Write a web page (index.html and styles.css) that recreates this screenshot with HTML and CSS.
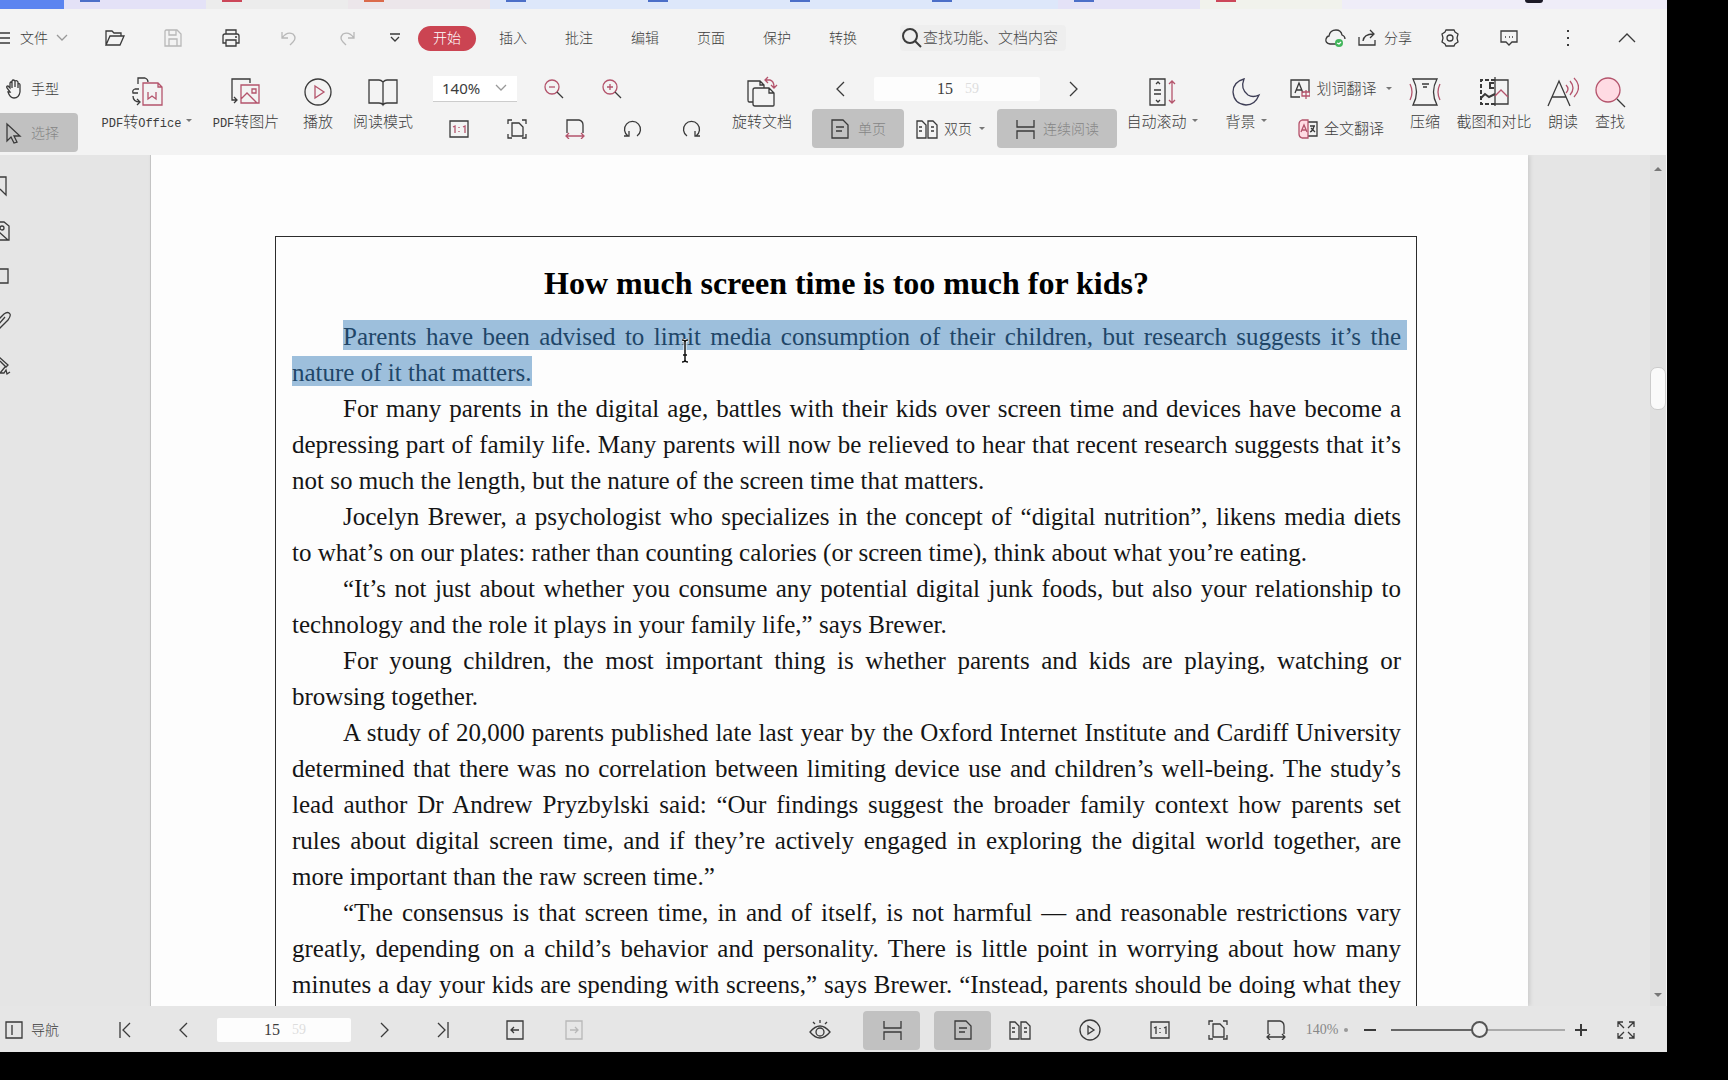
FILE: index.html
```html
<!DOCTYPE html>
<html lang="zh-CN">
<head>
<meta charset="utf-8">
<title>PDF</title>
<link rel="stylesheet" href="styles.css">
</head>
<body>
<svg class="sprite" aria-hidden="true">
  <symbol id="fit" viewBox="0 0 20 20"><path d="M1 5V1h4M15 1h4v4M19 15v4h-4M5 19H1v-4M5 4h7l4 4v9H5z"/></symbol>
  <symbol id="one" viewBox="0 0 20 20"><path d="M1 2h18v16H1z"/><path class="accent" d="M4 8l2-1v7M14 8l2-1v7M10 8v1M10 12v1"/></symbol>
  <symbol id="wide" viewBox="0 0 20 20"><path d="M2 14V1h12q4 1 4 5v8"/><path class="accent" d="M1 17h18M4 14l-3 3 3 3M16 14l3 3-3 3"/></symbol>
  <symbol id="single" viewBox="0 0 20 20"><path d="M2 1h11l5 5v13H2zM6 8h8M6 12h6"/></symbol>
  <symbol id="double" viewBox="0 0 22 20"><path d="M1 2h5l4 4v13H1zM12 2h5l4 4v13h-9zM3 8h3M3 12h3M15 8h3M15 12h3"/></symbol>
  <symbol id="flow" viewBox="0 0 20 20"><path d="M2 1v7h17V1M2 20v-8h17v8"/></symbol>
</svg>
<div class="app">
  <div class="tabs">
    <i class="tab-active"></i>
    <i class="tab lilac"><b class="blue"></b></i><i class="tab"><b class="red"></b></i><i class="tab pink"><b class="orange"></b></i><i class="tab sky"><b class="blue"></b></i><i class="tab sky"><b class="blue"></b></i><i class="tab sky"><b class="blue"></b></i><i class="tab sky"><b class="blue"></b></i><i class="tab lilac"><b class="blue"></b></i><i class="tab cream"><b class="red"></b></i>
    <span class="tab-rest"><b></b></span>
  </div>

  <header class="menu">
    <button class="file"><svg width="12" height="14" viewBox="0 0 12 14"><path d="M0 2h10M0 7h10M0 12h10"/></svg>文件<svg class="dim" width="12" height="8" viewBox="0 0 12 8"><path d="M1 1l5 5 5-5"/></svg></button>
    <button class="tool" aria-label="打开"><svg width="22" height="18" viewBox="0 0 22 18"><path d="M2 16V2h6l2 2h7v3M2 16L6 7h14l-4 9z"/></svg></button>
    <button class="tool off" aria-label="保存"><svg width="18" height="18" viewBox="0 0 18 18"><path d="M1 17V2l1-1h11l4 4v12zM5 17v-7h8v7M5 1v5h7V1"/></svg></button>
    <button class="tool" aria-label="打印"><svg width="20" height="18" viewBox="0 0 20 18"><path d="M5 5V1h10v4M5 14H2V7q0-2 2-2h12q2 0 2 2v7h-3M5 11h10v6H5zM14 8h2"/></svg></button>
    <button class="tool off" aria-label="撤销"><svg width="18" height="16" viewBox="0 0 18 16"><path d="M2 2v6h6M2 8q5-7 11-4 4 4 0 8l-3 3"/></svg></button>
    <button class="tool off" aria-label="重做"><svg width="18" height="16" viewBox="0 0 18 16"><path d="M16 2v6h-6M16 8Q11 1 5 4q-4 4 0 8l3 3"/></svg></button>
    <button class="tool narrow" aria-label="更多"><svg width="12" height="10" viewBox="0 0 12 10"><path d="M1 1h10M2 4l4 4 4-4"/></svg></button>
    <nav class="menu-tabs">
      <button class="current">开始</button><button>插入</button><button>批注</button><button>编辑</button><button>页面</button><button>保护</button><button>转换</button>
    </nav>
    <label class="search"><svg width="20" height="20" viewBox="0 0 20 20"><circle cx="8" cy="8" r="7"/><path d="M13 13l6 6"/></svg><input type="text" placeholder="查找功能、文档内容" aria-label="查找功能、文档内容"></label>
    <span class="grow"></span>
    <button aria-label="云"><svg width="22" height="20" viewBox="0 0 22 20"><path d="M12 16H6Q1 15 2 11q1-3 3-3 1-6 7-6 5 0 6 5 3 1 3 4"/><circle cx="15" cy="15" r="4" class="ok"/><path class="tick" d="M13 15l2 1 2-2"/></svg></button>
    <button class="share"><svg width="18" height="18" viewBox="0 0 18 18"><path d="M1 8v8h16v-5M5 12q1-7 10-7M12 1l4 4-4 4"/></svg>分享</button>
    <button class="tool wide" aria-label="设置"><svg width="20" height="20" viewBox="0 0 20 20"><path d="M6 2h8l1 2 3 2-1 4 1 4-3 2-1 2H6l-1-2-3-2 1-4-1-4 3-2z"/><circle cx="10" cy="10" r="3"/></svg></button>
    <button class="tool wide" aria-label="反馈"><svg width="18" height="18" viewBox="0 0 18 18"><path d="M1 2h16v11h-5l-3 3-3-3H1zM5 8h1M9 8h1M12 8h1"/></svg></button>
    <button class="tool wide" aria-label="菜单"><svg width="4" height="18" viewBox="0 0 4 18"><path class="bold" d="M2 1v2M2 8v2M2 15v2"/></svg></button>
    <button class="tool wide" aria-label="收起"><svg width="18" height="10" viewBox="0 0 18 10"><path d="M1 9l8-8 8 8"/></svg></button>
  </header>

  <section class="ribbon">
    <div class="modes">
      <button><svg width="18" height="20" viewBox="0 0 18 20"><path d="M5 13L2 9q-1-2 1-2l2 2V4q1-2 2 0v5-7q1-2 3 0v6-6q2-1 3 1v6-4q2-1 2 1v7q-1 6-6 6-4 0-6-6z"/></svg>手型</button>
      <button class="pressed"><svg width="18" height="22" viewBox="0 0 18 22"><path d="M2 2v17l4-4 3 6 3-1-3-6h6z"/></svg>选择</button>
    </div>
    <button class="big w138"><svg width="32" height="32" viewBox="0 0 32 32"><path d="M7 8V2h7q3 1 3 4M8 13H4q-3 1-2 4h5M2 20q0 6 7 6M6 23l3 3-3 3"/><path class="red-line" d="M12 7h15l4 4v18H12zM17 16v7l4-3 4 3v-7M27 7v4h4"/></svg><span><span class="latin">PDF</span>转<span class="latin">Office</span><i class="caret"></i></span></button>
    <button class="big w60"><svg width="32" height="32" viewBox="0 0 32 32"><path d="M7 24H2V3h18v4M4 21l3 3-3 3"/><path class="red-line" d="M11 9h18v18H11zM11 23l6-6 10 10M22 13h4v4h-4z"/></svg><span><span class="latin">PDF</span>转图片</span></button>
    <button class="big w84"><svg width="32" height="32" viewBox="0 0 32 32"><circle cx="16" cy="16" r="13"/><path class="red-line" d="M13 10l9 6-9 6z"/></svg>播放</button>
    <button class="big w46"><svg width="32" height="32" viewBox="0 0 32 32"><path d="M16 6q-2-2-4-2H2v23h10q3 0 4 2 1-2 4-2h10V4H20q-2 0-4 2v23"/></svg>阅读模式</button>
    <div class="zoom">
      <div class="row">
        <div class="zoom-box"><select aria-label="缩放"><option>140%</option></select><svg class="dim" width="12" height="8" viewBox="0 0 12 8"><path d="M1 1l5 5 5-5"/></svg></div>
        <button class="cell" aria-label="缩小"><svg width="22" height="22" viewBox="0 0 22 22"><circle class="red-line" cx="9" cy="9" r="7"/><path class="red-line" d="M6 9h6"/><path d="M14 14l6 6"/></svg></button>
        <button class="cell" aria-label="放大"><svg width="22" height="22" viewBox="0 0 22 22"><circle class="red-line" cx="9" cy="9" r="7"/><path class="red-line" d="M6 9h6M9 6v6"/><path d="M14 14l6 6"/></svg></button>
      </div>
      <div class="row colored">
        <button class="cell" aria-label="实际大小"><svg width="20" height="20"><use href="#one"/></svg></button>
        <button class="cell" aria-label="适合页面"><svg width="20" height="20"><use href="#fit"/></svg></button>
        <button class="cell" aria-label="适合宽度"><svg width="20" height="20"><use href="#wide"/></svg></button>
        <button class="cell" aria-label="左旋"><svg width="20" height="20" viewBox="0 0 20 20"><path d="M14 17a8 8 0 1 0-9 0M1 17h5v-5"/></svg></button>
        <button class="cell" aria-label="右旋"><svg width="20" height="20" viewBox="0 0 20 20"><path d="M6 17a8 8 0 1 1 9 0M19 17h-5v-5"/></svg></button>
      </div>
    </div>
    <button class="big w84"><svg width="32" height="32" viewBox="0 0 32 32"><path d="M7 26H3Q2 26 2 24V5h12l4 4v3M7 14q0-2 2-2h14l5 5v12q0 1-1 1H9q-2 0-2-2zM14 5v4h4M23 12v5h5"/><path class="red-line" d="M19 4h5q4 1 4 7M22 1l-3 3 3 3M25 9l3 3 3-3"/></svg>旋转文档</button>
    <div class="paging">
      <div class="row pager">
        <button aria-label="上一页"><svg width="10" height="16" viewBox="0 0 10 16"><path d="M9 1L2 8l7 7"/></svg></button>
        <label class="page-no"><input type="text" value="15" aria-label="页码"><span>59</span></label>
        <button aria-label="下一页"><svg width="10" height="16" viewBox="0 0 10 16"><path d="M1 1l7 7-7 7"/></svg></button>
      </div>
      <div class="row views">
        <button class="pressed"><svg width="20" height="20"><use href="#single"/></svg>单页</button>
        <button><svg width="22" height="20"><use href="#double"/></svg>双页<i class="caret"></i></button>
        <button class="pressed"><svg width="20" height="20"><use href="#flow"/></svg>连续阅读</button>
      </div>
    </div>
    <button class="big w84"><svg width="32" height="32" viewBox="0 0 32 32"><path d="M4 3h15v26H4zM8 14h7M8 18h7M10 8l2-2 2 2M10 24l2 2 2-2"/><path class="red-line" d="M26 5v22M23 8l3-3 3 3M23 24l3 3 3-3"/></svg><span>自动滚动<i class="caret"></i></span></button>
    <button class="big w84"><svg width="32" height="32" viewBox="0 0 32 32"><path class="indigo" d="M14 3Q3 6 3 16q1 12 13 13 9 0 13-10-6 3-11 0Q10 13 14 3z"/></svg><span>背景<i class="caret"></i></span></button>
    <div class="translate">
      <button><svg width="20" height="20" viewBox="0 0 20 20"><path d="M10 18H1V1h18v12M5 14l4-10 4 10M6 11h6"/><path class="red-line" d="M12 13h8v4h-8zM16 11v9"/></svg>划词翻译<i class="caret"></i></button>
      <button><svg width="20" height="20" viewBox="0 0 20 20"><path d="M10 3h9v14h-9M12 7h5M16 7q-1 5-4 6M13 9l4 4"/><path class="pink-fill" d="M4 1h6v18H4q-3-1-3-4V5q0-3 3-4z"/><path class="red-line" d="M3 13l3-7 3 7M4 11h4"/></svg>全文翻译</button>
    </div>
    <button class="big w62"><svg width="32" height="32" viewBox="0 0 32 32"><path d="M4 3h24q-7 13 0 26H4Q11 16 4 3zM13 8h7M14 11h4"/><path class="red-line" d="M1 8q4 8 0 16M31 8q-4 8 0 16"/></svg>压缩</button>
    <button class="big w76"><svg width="32" height="32" viewBox="0 0 32 32"><path class="dash" d="M17 4H3v24h14"/><path d="M17 1v29M17 4h13v24H17"/><path class="bold" d="M3 22l4-4 4 3 6-3M16 7h-4v5h4"/><path class="red-line" d="M17 20l6-6 7 7"/></svg>截图和对比</button>
    <button class="big w62"><svg width="32" height="32" viewBox="0 0 32 32"><path d="M1 30L12 5l11 25M5 21h14"/><path class="red-line" d="M19 9q4 4 0 8M23 5q6 7 0 14M27 2q9 9 0 19"/></svg>朗读</button>
    <button class="big w32"><svg width="32" height="32" viewBox="0 0 32 32"><circle class="pink-fill" cx="14" cy="14" r="12"/><path d="M23 23l8 8"/></svg>查找</button>
  </section>

  <main class="workspace">
    <aside class="side">
      <svg width="12" height="22" viewBox="0 0 12 22"><path d="M-6 2H6v18l-6-6"/></svg>
      <svg width="12" height="22" viewBox="0 0 12 22"><path d="M-4 2H4l5 4v14H-4M-1 12l9 8"/><circle cx="2" cy="8" r="2"/></svg>
      <svg width="12" height="22" viewBox="0 0 12 22"><path d="M-4 4H8v14H-4"/></svg>
      <svg width="12" height="22" viewBox="0 0 12 22"><path d="M-4 12l8-8q4-3 6 0 1 2-2 6l-9 9M-2 15l7-8"/></svg>
      <svg width="12" height="22" viewBox="0 0 12 22"><path d="M-1 2l9 8-2 2-6-6M5 12l-5 6h4l2-3 1 4 3-2"/></svg>
    </aside>
    <article class="page">
      <div class="frame">
        <h1>How much screen time is too much for kids?</h1>
        <p><mark class="full">Parents have been advised to limit media consumption of their children, but research suggests it’s the</mark>
          <span class="last"><mark>nature of it that matters.</mark></span></p>
        <p>For many parents in the digital age, battles with their kids over screen time and devices have become a<br>
          depressing part of family life. Many parents will now be relieved to hear that recent research suggests that it’s
          <span class="last">not so much the length, but the nature of the screen time that matters.</span></p>
        <p>Jocelyn Brewer, a psychologist who specializes in the concept of “digital nutrition”, likens media diets
          <span class="last">to what’s on our plates: rather than counting calories (or screen time), think about what you’re eating.</span></p>
        <p>“It’s not just about whether you consume any potential digital junk foods, but also your relationship to
          <span class="last">technology and the role it plays in your family life,” says Brewer.</span></p>
        <p>For young children, the most important thing is whether parents and kids are playing, watching or
          <span class="last">browsing together.</span></p>
        <p>A study of 20,000 parents published late last year by the Oxford Internet Institute and Cardiff University<br>
          determined that there was no correlation between limiting device use and children’s well-being. The study’s<br>
          lead author Dr Andrew Pryzbylski said: “Our findings suggest the broader family context how parents set<br>
          rules about digital screen time, and if they’re actively engaged in exploring the digital world together, are
          <span class="last">more important than the raw screen time.”</span></p>
        <p>“The consensus is that screen time, in and of itself, is not harmful — and reasonable restrictions vary<br>
          greatly, depending on a child’s behavior and personality. There is little point in worrying about how many<br>
          minutes a day your kids are spending with screens,” says Brewer. “Instead, parents should be doing what they</p>
        <svg class="ibeam" width="10" height="24" viewBox="0 0 10 24"><path class="halo" d="M2 1q3 0 3 2 0-2 3-2M5 3v18M2 23q3 0 3-2 0 2 3 2M3 16h4"/><path d="M2 1q3 0 3 2 0-2 3-2M5 3v18M2 23q3 0 3-2 0 2 3 2M3 16h4"/></svg>
      </div>
    </article>
    <div class="scroll"><i class="arrow up"></i><i class="before"></i><i class="thumb"></i><i class="after"></i><i class="arrow down"></i></div>
  </main>

  <footer class="status">
    <button class="nav"><svg width="18" height="18" viewBox="0 0 18 18"><path d="M1 1h16v16H1zM7 4v10"/></svg>导航</button>
    <button class="s58" aria-label="首页"><svg width="14" height="16" viewBox="0 0 14 16"><path d="M2 0v16M12 1L5 8l7 7"/></svg></button>
    <button class="s58" aria-label="上一页"><svg width="10" height="16" viewBox="0 0 10 16"><path d="M9 1L2 8l7 7"/></svg></button>
    <label class="page-no"><input type="text" value="15" aria-label="当前页"><span>59</span></label>
    <button class="s58" aria-label="下一页"><svg width="10" height="16" viewBox="0 0 10 16"><path d="M1 1l7 7-7 7"/></svg></button>
    <button class="s58" aria-label="末页"><svg width="14" height="16" viewBox="0 0 14 16"><path d="M12 0v16M2 1l7 7-7 7"/></svg></button>
    <button class="s86" aria-label="后退"><svg width="18" height="20" viewBox="0 0 18 20"><path d="M1 1h16v18H1zM13 10H5M8 7l-3 3 3 3"/></svg></button>
    <button class="s32 off" aria-label="前进"><svg width="18" height="20" viewBox="0 0 18 20"><path d="M1 1h16v18H1zM5 10h8M10 7l3 3-3 3"/></svg></button>
    <span class="grow"></span>
    <button class="s86" aria-label="护眼"><svg width="22" height="20" viewBox="0 0 22 20"><path d="M1 12q10-12 20 0-10 12-20 0zM11 0v3M4 2l2 2M18 2l-2 2"/><circle cx="11" cy="12" r="4"/></svg></button>
    <button class="s58 pressed" aria-label="连续阅读"><svg width="20" height="20"><use href="#flow"/></svg></button>
    <button class="s58 pressed" aria-label="单页"><svg width="20" height="20"><use href="#single"/></svg></button>
    <button class="s58" aria-label="双页"><svg width="22" height="20"><use href="#double"/></svg></button>
    <button class="s82" aria-label="播放"><svg width="22" height="22" viewBox="0 0 22 22"><circle cx="11" cy="11" r="10"/><path d="M9 7l6 4-6 4z"/></svg></button>
    <button class="s58" aria-label="实际大小"><svg width="20" height="20"><use href="#one"/></svg></button>
    <button class="s58" aria-label="适合页面"><svg width="20" height="20"><use href="#fit"/></svg></button>
    <button class="s58" aria-label="适合宽度"><svg width="20" height="20"><use href="#wide"/></svg></button>
    <button class="percent">140%<i class="dot"></i></button>
    <button class="s42" aria-label="缩小"><svg width="12" height="12" viewBox="0 0 12 12"><path class="bold" d="M0 6h12"/></svg></button>
    <input class="slider" type="range" min="0" max="100" value="51" aria-label="缩放比例">
    <button class="s32" aria-label="放大"><svg width="12" height="12" viewBox="0 0 12 12"><path class="bold" d="M0 6h12M6 0v12"/></svg></button>
    <button class="s58" aria-label="全屏"><svg width="18" height="18" viewBox="0 0 18 18"><path d="M7 7L1 1M1 6V1h5M11 7l6-6M12 1h5v5M7 11l-6 6M1 12v5h5M11 11l6 6M17 12v5h-5"/></svg></button>
  </footer>
</div>
</body>
</html>
```
FILE: styles.css
```css
* { box-sizing: border-box; }
body {
  margin: 0;
  height: 100vh;
  padding: 0 61px 28px 0;
  background: #000;
  color: #3c3c3c;
  font: 300 15px/20px "Liberation Sans", "Noto Sans CJK SC", sans-serif;
}
.sprite { position: absolute; width: 0; height: 0; }
svg { fill: none; stroke: #3a3a3a; stroke-width: 1.3; flex: none; }
button {
  margin: 0; padding: 0; border: 0; background: none;
  color: inherit; font: inherit; white-space: nowrap;
  display: flex; align-items: center; justify-content: center; flex: none;
}
input, select { font: inherit; color: inherit; border: 0; padding: 0; margin: 0; background: none; }
.grow { flex: 1; }
.dim { stroke: #999; }
.off svg { stroke: #b8b8b8; }
.red-line { stroke: #b4546c; }
.colored { --accent: #b4546c; }
.accent { stroke: var(--accent, #3a3a3a); }
.pink-fill { fill: #ffdbe3; stroke: #b4546c; }
.indigo { stroke: #3d3d55; }
.bold { stroke-width: 2; }
.dash { stroke-dasharray: 4 2; stroke-width: 2; }
.ok { fill: #43b65c; stroke: none; }
.tick { stroke: #fff; }
.caret { display: inline-block; border: 3px solid transparent; border-top-color: #777; border-bottom: 0; margin-left: 5px; vertical-align: 5px; }
.pressed { background: #c1c1c1; border-radius: 4px; color: #858585; }

.app { height: 100%; display: flex; flex-direction: column; background: #f3f3f3; overflow: hidden; }

.tabs { display: flex; height: 9px; flex: none; overflow: hidden; }
.tab-active { width: 64px; background: #5b84f0; }
.tab { width: 142px; padding-left: 16px; background: #ececec; }
.tab b { display: block; width: 20px; height: 2px; }
.blue { background: #4c6fc8; }
.red { background: #cc4759; }
.orange { background: #db6a4b; }
.lilac { background: #e4e2f7; }
.pink { background: #ece6ea; }
.sky { background: #dde7fa; }
.cream { background: #f1f2ec; }
.tab-rest { flex: 1; background: #efedf8; display: flex; justify-content: flex-end; padding-right: 124px; }
.tab-rest b { width: 18px; height: 3px; border-radius: 0 0 9px 9px; background: #1c1a28; }

.menu { display: flex; align-items: center; height: 58px; padding-right: 11px; flex: none; font-size: 14px; }
.file { width: 86px; justify-content: flex-start; gap: 8px; }
.tool { width: 58px; }
.tool.narrow { width: 38px; }
.tool.wide { width: 59px; }
.menu-tabs { display: flex; }
.menu-tabs button { width: 58px; height: 25px; margin: 0 4px; border-radius: 13px; }
.menu-tabs .current { background: #cb4452; color: #fff; }
.search { display: flex; align-items: center; gap: 1px; width: 166px; height: 26px; margin-left: 24px; padding-left: 2px; background: #eee; border-radius: 4px; font-size: 15px; }
.search svg { stroke-width: 2; }
.search input { width: 100%; min-width: 0; }
.search input::placeholder { color: #4a4a4a; opacity: 1; }
.share { gap: 8px; margin: 0 8px 0 12px; }

.ribbon { display: flex; align-items: flex-start; height: 88px; padding-top: 2px; flex: none; overflow: hidden; }
.modes { width: 78px; display: flex; flex-direction: column; gap: 5px; }
.modes button { height: 39px; gap: 8px; padding-left: 5px; justify-content: flex-start; font-size: 14px; }
.modes .pressed { border-radius: 0 4px 4px 0; }
.big { flex-direction: column; gap: 4px; padding-top: 7px; line-height: 20px; }
.latin { font-family: "Liberation Mono", monospace; font-size: 12px; }
.w138 { width: 138px; }
.w60 { width: 60px; }
.w84 { width: 84px; }
.w46 { width: 46px; }
.w62 { width: 62px; }
.w76 { width: 76px; }
.w32 { width: 32px; }
.row { display: flex; align-items: center; height: 39px; }
.zoom, .paging { display: flex; flex-direction: column; gap: 1px; flex: none; }
.zoom { width: 290px; margin-left: 24px; }
.cell { width: 58px; }
.zoom-box { display: flex; align-items: center; width: 84px; height: 26px; margin: 0 8px 0 3px; padding: 0 10px 0 9px; background: #fff; border-bottom: 1px solid #ccc; font: 400 15px/20px "Noto Sans", sans-serif; }
.zoom-box select { appearance: none; flex: 1; min-width: 0; }
.page-no { display: flex; align-items: center; justify-content: center; gap: 10px; height: 24px; background: #fdfdfd; border-radius: 2px; }
.page-no input { width: 20px; text-align: center; font: 16px/20px "Liberation Serif", serif; }
.page-no span { color: #ddd; font: 14px/20px "Liberation Serif", serif; }
.paging { width: 308px; margin-left: 8px; padding-right: 3px; }
.pager { padding: 0 38px 0 23px; justify-content: space-between; }
.pager .page-no { width: 166px; }
.views { justify-content: space-between; font-size: 14px; }
.views button { height: 39px; gap: 6px; }
.views .pressed { gap: 8px; padding: 0 18px; }
.views .caret { margin-left: 1px; }
.views .caret, .translate .caret { vertical-align: 0; }
.translate { width: 106px; display: flex; flex-direction: column; gap: 1px; }
.translate button { height: 39px; gap: 6px; }
.translate .caret { margin-left: 3px; }

.workspace { flex: 1; min-height: 0; display: flex; background: #e5e5e5; overflow: hidden; }
.side { width: 150px; flex: none; display: flex; flex-direction: column; gap: 23px; padding-top: 20px; }
.page { flex: 1; min-width: 0; background: #fdfdfd; border-left: 1px solid #c4c4c4; box-shadow: 2px 0 4px #ccc; padding: 81px 111px 0 124px; }
.frame { position: relative; border: 1px solid #2c2c2c; padding: 26px 15px 26px 16px; color: #151515; font: 400 25px/36px "Liberation Serif", "Noto Sans CJK SC", serif; }
.frame h1 { margin: 0 0 16px; font-size: 32px; line-height: 40px; text-align: center; color: #000; }
.frame p { margin: 0; text-indent: 51px; text-align: justify; text-align-last: justify; }
.last { display: block; text-indent: 0; text-align-last: left; }
mark { background: #9dbfdc; color: #1f4668; padding: 3px 0 0; }
mark.full { padding-right: 6px; margin-right: -6px; }
.ibeam { position: absolute; left: 404px; top: 102px; stroke: #111; stroke-width: 1.5; }
.halo { stroke: #fff; stroke-width: 3; }
.scroll { width: 17px; margin-left: 122px; flex: none; display: flex; flex-direction: column; align-items: center; padding: 12px 0 9px; background: #e0e0e0; border-right: 1px solid #f5f5f5; }
.arrow { border: 4px solid transparent; }
.up { border-bottom: 4px solid #777; border-top: 0; }
.down { border-top: 4px solid #777; border-bottom: 0; }
.before { flex: 196; }
.after { flex: 582; }
.thumb { width: 16px; height: 43px; border-radius: 7px; background: #fafafa; border: 1px solid #ccc; }

.status { display: flex; align-items: center; height: 46px; padding: 2px 12px 0 0; background: #e6e6e6; flex: none; font-size: 14px; }
.nav { width: 96px; padding-left: 5px; gap: 8px; justify-content: flex-start; }
.status .page-no { width: 134px; margin: 0 5px; }
.s32 { width: 32px; }
.s42 { width: 42px; }
.s58 { width: 58px; }
.s82 { width: 82px; }
.s86 { width: 86px; }
.status .pressed { width: 57px; height: 39px; }
.status .pressed + .pressed { margin-left: 14px; }
.percent { width: 44px; gap: 6px; color: #888; font: 14px/20px "Liberation Serif", serif; }
.dot { width: 4px; height: 4px; border-radius: 2px; background: #999; }
.slider { appearance: none; width: 174px; height: 24px; }
.slider::-webkit-slider-runnable-track { height: 2px; background: linear-gradient(90deg, #666 50%, #aaa 50%); }
.slider::-webkit-slider-thumb { appearance: none; width: 17px; height: 17px; margin-top: -8px; border: 2px solid #555; border-radius: 50%; background: #eee; }
```
